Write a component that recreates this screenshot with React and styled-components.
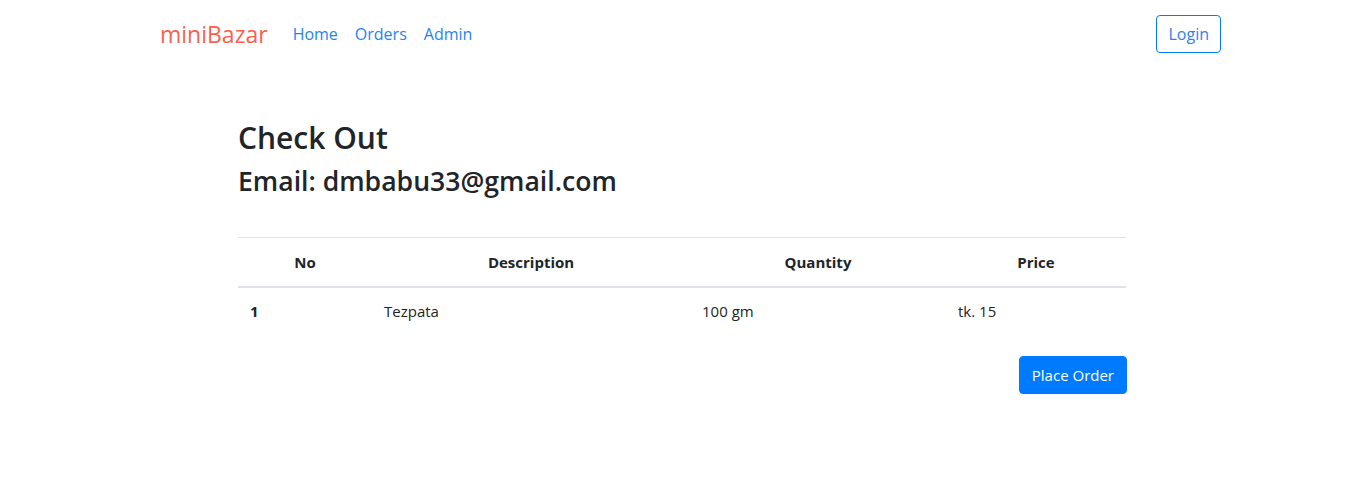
import React from "react";
import styled, { createGlobalStyle } from "styled-components";

const GlobalStyle = createGlobalStyle`
  * { box-sizing: border-box; }
  body {
    margin: 0;
    background: #fff;
    color: #212529;
    font-family: "Open Sans", "Noto Sans", sans-serif;
    font-size: 16px;
    line-height: 1.5;
  }
`;

const orderItems = [{ no: 1, name: "Tezpata", quantity: "100 gm", price: "tk. 15" }];

const columns = [
  { title: "No", width: 134 },
  { title: "Description", width: 318 },
  { title: "Quantity", width: 256 },
  { title: "Price", width: 180 },
];

const App = () => {
  return (
    <>
      <GlobalStyle />
      <NavbarWrapper>
        <Brand href="#">miniBazar</Brand>
        <NavLinks>
          <NavItem href="#">Home</NavItem>
          <NavItem href="#">Orders</NavItem>
          <NavItem href="#">Admin</NavItem>
        </NavLinks>
        <OutlineButton type="button">Login</OutlineButton>
      </NavbarWrapper>

      <Main>
        <Title>Check Out</Title>
        <SubTitle>Email: dmbabu33@gmail.com</SubTitle>

        <Table>
          <colgroup>
            {columns.map((c) => (
              <col key={c.title} style={{ width: c.width }} />
            ))}
          </colgroup>
          <thead>
            <tr>
              {columns.map((c) => (
                <Th key={c.title}>{c.title}</Th>
              ))}
            </tr>
          </thead>
          <tbody>
            {orderItems.map((item) => (
              <tr key={item.no}>
                <Td bold>{item.no}</Td>
                <Td>{item.name}</Td>
                <Td>{item.quantity}</Td>
                <Td>{item.price}</Td>
              </tr>
            ))}
          </tbody>
        </Table>

        <Actions>
          <PrimaryButton type="button">Place Order</PrimaryButton>
        </Actions>
      </Main>
    </>
  );
};

const NavbarWrapper = styled.nav`
  display: flex;
  align-items: center;
  padding: 15px 143px 0 160px;
  height: 53px;
`;

const Brand = styled.a`
  font-size: 23px;
  line-height: 1.5;
  color: #fc5f4f;
  text-decoration: none;
  margin-right: 17px;
`;

const NavLinks = styled.div`
  display: flex;
  flex: 1;
`;

const NavItem = styled.a`
  color: #1d84f6;
  font-size: 16px;
  text-decoration: none;
  padding: 8px 9px 8px 8px;
`;

const OutlineButton = styled.button`
  font-family: inherit;
  font-size: 16px;
  line-height: 24px;
  padding: 6px 11px;
  height: 38px;
  color: #2d7ef0;
  background: #fff;
  border: 1px solid #007bff;
  border-radius: 4px;
`;

const Main = styled.main`
  width: 888px;
  margin: 0 auto;
  padding-top: 67px;
`;

const Title = styled.h2`
  font-size: 30px;
  font-weight: 600;
  line-height: 1.2;
  margin: 0 0 10px;
`;

const SubTitle = styled.h3`
  font-size: 26.6px;
  font-weight: 600;
  line-height: 1.2;
  margin: 0 0 39px;
`;

const Table = styled.table`
  width: 100%;
  border-collapse: collapse;
  table-layout: fixed;
  margin-bottom: 21px;
`;

const Th = styled.th`
  font-weight: 700;
  font-size: 15px;
  text-align: center;
  padding: 13px 12px;
  border-top: 1px solid #dee2e6;
  border-bottom: 2px solid #dee2e6;
`;

const Td = styled.td`
  padding: 12px;
  font-size: 15px;
  font-weight: ${(p) => (p.bold ? 700 : 400)};
  border-top: 1px solid #dee2e6;
`;

const Actions = styled.div`
  display: flex;
  justify-content: flex-end;
  margin-right: -1px;
`;

const PrimaryButton = styled.button`
  font-family: inherit;
  font-size: 15px;
  line-height: 24px;
  padding: 6px 12px;
  height: 38px;
  color: #fff;
  background: #007bff;
  border: 1px solid #007bff;
  border-radius: 4px;
`;

export default App;
